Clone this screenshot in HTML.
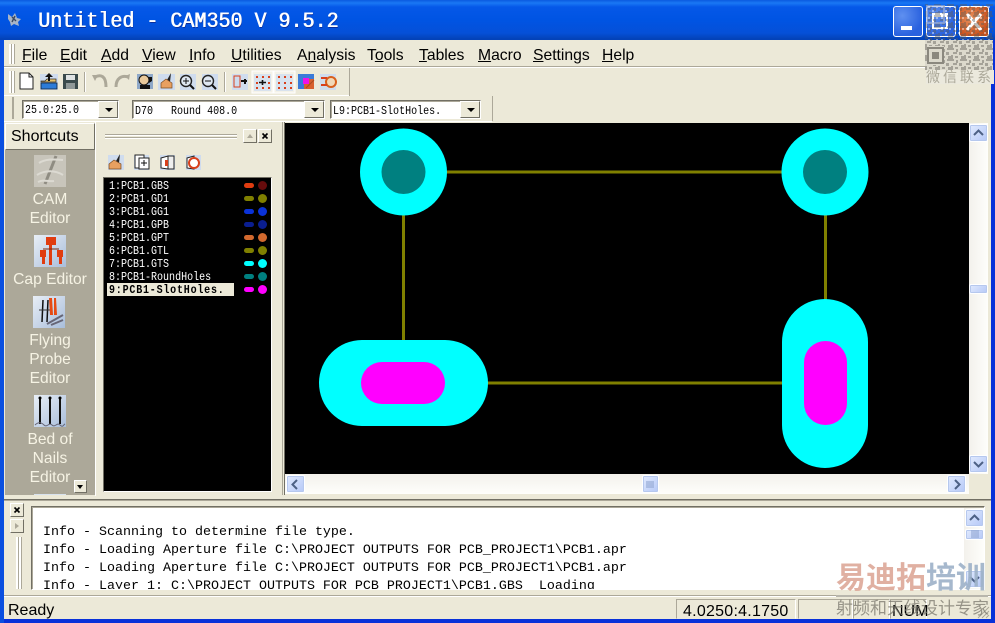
<!DOCTYPE html>
<html><head><meta charset="utf-8"><style>
html,body{margin:0;padding:0;background:#ece9d8}
#w{position:relative;width:995px;height:623px;overflow:hidden;background:#ece9d8;font-family:"Liberation Sans",sans-serif}
#w div,#w span.a,#w svg{position:absolute}
.t{white-space:pre;line-height:1}
.m{font-size:15.7px;color:#000;top:47px;white-space:pre;line-height:18px}
.m u{text-decoration:underline}
.mono{font-family:"Liberation Mono",monospace;white-space:pre;line-height:1}
.sx{font-size:12px;transform:scaleX(.834);transform-origin:0 0}
.lay{left:109px;font-size:12px;color:#fff;font-family:"Liberation Mono",monospace;white-space:pre;line-height:12px;transform:scaleX(.834);transform-origin:0 0}
.pill{left:244px;width:10px;height:5px;border-radius:3px}
.dot{left:258px;width:9px;height:9px;border-radius:50%}
.lab{left:5px;width:90px;text-align:center;color:#f6f3e4;font-size:15.6px;line-height:19px;white-space:pre}
.ic{width:32px;height:32px;background:linear-gradient(135deg,#e8eef6,#a9bedb)}
.xb{background:#ece9d8;border:1px solid;border-color:#fff #716f64 #716f64 #fff;box-sizing:border-box}
.sb{background:linear-gradient(135deg,#e1eafe,#b5c8f7);border:1px solid #fff;border-radius:2px;box-sizing:border-box;box-shadow:0 0 0 1px #b6c8ee inset}
.in{background:#fff;border:1px solid;border-color:#716f64 #fff #fff #716f64;box-sizing:border-box;box-shadow:inset 1px 1px 0 #aca899}
.cb{background:#ece9d8;border:1px solid;border-color:#fff #716f64 #716f64 #fff;box-sizing:border-box}
.cb:after{content:"";position:absolute;left:6px;top:6px;border-left:4px solid transparent;border-right:4px solid transparent;border-top:4px solid #000}
.log{left:43px;font-size:13.33px;color:#000;font-family:"Liberation Mono",monospace;white-space:pre;line-height:15px}
.gr{width:2px;background:#fff;border-right:1px solid #aca899}
</style></head><body><div id="w">

<!-- frame & title -->
<div style="left:0;top:0;width:995px;height:623px;background:#0831d9"></div>
<div style="left:0;top:0;width:995px;height:40px;background:linear-gradient(#0a5ae0 0,#1a78f4 3px,#0558e8 7px,#0054e3 20px,#0550d8 33px,#0342b8 39px)"></div>
<div style="left:0;top:40px;width:4px;height:583px;background:#0a4fe0"></div>
<div style="left:991px;top:40px;width:4px;height:583px;background:#0831d9"></div>
<div style="left:4px;top:40px;width:987px;height:579px;background:#ece9d8"></div>
<svg style="left:6px;top:11px" width="17" height="17" viewBox="0 0 17 17"><path d="M2 3l4 3 3-4 2 5 4 1-3 3 1 4-5-2-3 2-1-4-2-3z" fill="#a9b4c6"/><path d="M6 6l4 4M9 5l-3 6" stroke="#3c4a60" stroke-width="1.4"/></svg>
<div class="mono" style="left:38px;top:11px;font-size:22px;color:#fff;text-shadow:.7px 0 #fff,1px 1px 0 #0a2f9c;transform:scaleX(.91);transform-origin:0 0">Untitled - CAM350 V 9.5.2</div>

<!-- caption buttons -->
<div style="left:893px;top:6px;width:30px;height:31px;box-sizing:border-box;border:1px solid #fff;border-radius:3px;background:radial-gradient(circle at 30% 30%,#5f90f0,#2a62df 70%)"></div>
<div style="left:901px;top:26px;width:11px;height:4px;background:#fff"></div>
<div style="left:926px;top:6px;width:30px;height:31px;box-sizing:border-box;border:1px solid #fff;border-radius:3px;background:radial-gradient(circle at 30% 30%,#5f90f0,#2a62df 70%)"></div>
<div style="left:932px;top:13px;width:16px;height:16px;box-sizing:border-box;border:2px solid #fff;border-top-width:4px"></div>
<div style="left:959px;top:6px;width:30px;height:31px;box-sizing:border-box;border:1px solid #fff;border-radius:3px;background:radial-gradient(circle at 40% 40%,#e9925e,#c8501c 75%)"></div>
<svg style="left:964px;top:12px" width="20" height="20"><path d="M3 2L17 18M17 2L3 18" stroke="#fff" stroke-width="3.2"/></svg>

<!-- menu -->
<div style="left:4px;top:66px;width:987px;height:1px;background:#aca899"></div>
<div style="left:4px;top:67px;width:987px;height:1px;background:#fff"></div>
<div class="gr" style="left:9px;top:44px;height:20px"></div>
<div class="gr" style="left:12px;top:44px;height:20px"></div>
<div class="m" style="left:22px"><u>F</u>ile</div>
<div class="m" style="left:60px"><u>E</u>dit</div>
<div class="m" style="left:101px"><u>A</u>dd</div>
<div class="m" style="left:142px"><u>V</u>iew</div>
<div class="m" style="left:189px"><u>I</u>nfo</div>
<div class="m" style="left:231px"><u>U</u>tilities</div>
<div class="m" style="left:297px">A<u>n</u>alysis</div>
<div class="m" style="left:367px">T<u>o</u>ols</div>
<div class="m" style="left:419px"><u>T</u>ables</div>
<div class="m" style="left:478px"><u>M</u>acro</div>
<div class="m" style="left:533px"><u>S</u>ettings</div>
<div class="m" style="left:602px"><u>H</u>elp</div>

<!-- toolbar -->
<div style="left:349px;top:68px;width:1px;height:28px;background:#aca899"></div>
<div style="left:4px;top:95px;width:345px;height:1px;background:#fff"></div>
<div class="gr" style="left:9px;top:71px;height:22px"></div>
<div class="gr" style="left:12px;top:71px;height:22px"></div>
<svg style="left:16px;top:70px" width="330" height="24" viewBox="0 0 330 24">
<!-- new -->
<path d="M4 3h9l4 4v12H4z" fill="#fff" stroke="#222"/><path d="M13 3v4h4" fill="none" stroke="#222"/>
<!-- open -->
<rect x="24" y="4" width="18" height="16" fill="#cfdcee"/><path d="M25 11h4l2-2h9v3H25z" fill="#e8c36a" stroke="#333" stroke-width=".8"/><path d="M25 13h16v6H25z" fill="#2c7bd8" stroke="#123" stroke-width=".8"/><path d="M33 3l-4 4h3v4h2V7h3z" fill="#111"/>
<!-- save -->
<rect x="47" y="4" width="15" height="15" fill="#3a4a4c"/><rect x="50" y="5" width="9" height="5" fill="#dfe3e4"/><rect x="50" y="13" width="9" height="6" fill="#8f9898"/>
<rect x="68" y="2" width="1" height="20" fill="#aca899"/><rect x="69" y="2" width="1" height="20" fill="#fff"/>
<!-- undo/redo -->
<path d="M79 7c6-3 11-1 11 10" fill="none" stroke="#aca899" stroke-width="3"/><path d="M76 5l3 6 3-6z" fill="#aca899"/>
<path d="M100 17c0-9 6-12 12-10" fill="none" stroke="#aca899" stroke-width="3"/><path d="M114 4l-1 6-4-4z" fill="#aca899"/>
<!-- others -->
<rect x="121" y="4" width="16" height="15" fill="#8ea8c8"/><circle cx="128" cy="10" r="5" fill="#e8c89a" stroke="#111"/><path d="M132 7h4v4l-3 2zM124 15h10v4h-10z" fill="#111"/>
<rect x="142" y="4" width="17" height="16" fill="#cfdcee"/><path d="M155 3l-4 7 3 2z" fill="#222"/><path d="M145 13l5-4 6 4v5h-11z" fill="#e8a060" stroke="#7a4a20" stroke-width=".7"/>
<rect x="164" y="4" width="16" height="16" fill="#cfdcee"/><circle cx="170" cy="11" r="5.500" fill="#dfe8f2" stroke="#222" stroke-width="1.400"/><path d="M167 11h6M170 8v6" stroke="#111"/><path d="M174 15l4 4" stroke="#111" stroke-width="2"/>
<rect x="186" y="4" width="16" height="16" fill="#cfdcee"/><circle cx="192" cy="11" r="5.500" fill="#dfe8f2" stroke="#222" stroke-width="1.400"/><path d="M189 11h6" stroke="#111"/><path d="M196 15l4 4" stroke="#111" stroke-width="2"/>
<rect x="208" y="2" width="1" height="20" fill="#aca899"/><rect x="209" y="2" width="1" height="20" fill="#fff"/>
<rect x="216" y="4" width="16" height="16" fill="#cfdcee"/><rect x="218" y="6" width="6" height="11" fill="none" stroke="#d8401c"/><path d="M225 11h6M229 9v5" stroke="#111" stroke-width="2"/>
<rect x="236" y="1" width="21" height="22" fill="#f4f2e8" stroke="#fff"/><rect x="238" y="4" width="17" height="17" fill="#d8e2ee"/>
<g fill="#d8401c"><rect x="240" y="6" width="2" height="2"/><rect x="246" y="6" width="2" height="2"/><rect x="252" y="6" width="2" height="2"/><rect x="240" y="17" width="2" height="2"/><rect x="246" y="17" width="2" height="2"/><rect x="252" y="17" width="2" height="2"/><rect x="240" y="12" width="2" height="2"/><rect x="252" y="12" width="2" height="2"/></g><path d="M243 12.500h7M246.500 10v5" stroke="#111" stroke-width="1.600"/>
<rect x="258" y="1" width="21" height="22" fill="#f4f2e8" stroke="#fff"/><rect x="260" y="4" width="17" height="17" fill="#d8e2ee"/>
<g fill="#d8401c"><rect x="262" y="6" width="2" height="2"/><rect x="268" y="6" width="2" height="2"/><rect x="274" y="6" width="2" height="2"/><rect x="262" y="12" width="2" height="2"/><rect x="268" y="12" width="2" height="2"/><rect x="274" y="12" width="2" height="2"/><rect x="262" y="17" width="2" height="2"/><rect x="268" y="17" width="2" height="2"/><rect x="274" y="17" width="2" height="2"/></g>
<rect x="282" y="4" width="16" height="15" fill="#3a7ad8"/><path d="M288 9h10v10h-10z" fill="#d8602c"/><rect x="287" y="8" width="6" height="6" fill="#f010e8"/><path d="M290 18l8-8" stroke="#a84a20"/>
<rect x="304" y="4" width="16" height="16" fill="#cfdcee"/><circle cx="315" cy="12" r="5" fill="#f0d8b8" stroke="#d8601c" stroke-width="2"/><path d="M305 8h6M305 15h6" stroke="#d8401c" stroke-width="2"/>
</svg>

<!-- combos -->
<div style="left:492px;top:96px;width:1px;height:25px;background:#aca899"></div>
<div style="left:4px;top:121px;width:488px;height:1px;background:#fff"></div>
<div style="left:12px;top:97px;width:2px;height:22px;background:#aca899"></div>
<div class="in" style="left:22px;top:100px;width:97px;height:19px"></div>
<div class="cb" style="left:98px;top:101px;width:20px;height:17px"></div>
<div class="mono sx" style="left:25px;top:104px;color:#000">25.0:25.0</div>
<div class="in" style="left:132px;top:100px;width:193px;height:19px"></div>
<div class="cb" style="left:304px;top:101px;width:20px;height:17px"></div>
<div class="mono sx" style="left:135px;top:105px;color:#000">D70&#160;&#160;&#160;Round 408.0</div>
<div class="in" style="left:330px;top:100px;width:151px;height:19px"></div>
<div class="cb" style="left:460px;top:101px;width:20px;height:17px"></div>
<div class="mono sx" style="left:333px;top:105px;color:#000">L9:PCB1-SlotHoles.</div>

<!-- shortcuts -->
<div style="left:5px;top:149px;width:90px;height:346px;background:#aca899;overflow:hidden">
 <div style="left:29px;top:345px;width:32px;height:10px;background:#d8e2ee"></div>
</div>
<div style="left:5px;top:123px;width:90px;height:27px;box-sizing:border-box;background:#ece9d8;border:1px solid;border-color:#fff #716f64 #716f64 #fff"></div>
<div class="t" style="left:11px;top:129px;font-size:16px;color:#000">Shortcuts</div>
<div style="left:34px;top:155px;width:32px;height:32px;background:#c8c5bb"></div>
<svg style="left:34px;top:155px" width="32" height="32"><path d="M22 1L11 29" stroke="#8f8c82" stroke-width="3"/><path d="M5 8c6-4 14-4 24-3M3 20c8-5 18-5 26 0M4 27c6-3 10 0 16-1" stroke="#dcdad2" stroke-width="2" fill="none"/></svg>
<div class="lab" style="top:190px">CAM</div><div class="lab" style="top:209px">Editor</div>
<div class="ic" style="left:34px;top:235px"></div>
<svg style="left:34px;top:235px" width="32" height="32"><rect x="12" y="2" width="10" height="8" fill="#e03c10"/><rect x="15" y="10" width="3" height="20" fill="#e03c10"/><rect x="6" y="15" width="6" height="7" fill="#e03c10"/><rect x="8" y="22" width="3" height="7" fill="#e03c10"/><rect x="23" y="15" width="6" height="7" fill="#e03c10"/><rect x="25" y="22" width="3" height="7" fill="#e03c10"/><path d="M9 14h16" stroke="#7a2a10"/></svg>
<div class="lab" style="top:270px">Cap Editor</div>
<div class="ic" style="left:33px;top:296px"></div>
<svg style="left:33px;top:296px" width="32" height="32"><path d="M10 4l-1 22M15 4l-1 22" stroke="#111" stroke-width="1.500"/><path d="M6 14h12" stroke="#333"/><path d="M16 2h3l1 17h-3zM21 2h2l1 17h-3z" fill="#e64a14"/><path d="M14 28l16-9M18 29l12-5" stroke="#667" stroke-width="2"/></svg>
<div class="lab" style="top:331px">Flying</div><div class="lab" style="top:350px">Probe</div><div class="lab" style="top:369px">Editor</div>
<div class="ic" style="left:34px;top:395px"></div>
<svg style="left:34px;top:395px" width="32" height="32"><path d="M6 3v26M16 3v26M26 3v26" stroke="#111" stroke-width="2"/><path d="M1 30c3-3 6-3 9 0s5-3 8 0 5-3 8 0 3 0 5-1" fill="none" stroke="#667"/><circle cx="6" cy="3" r="1.500"/><circle cx="16" cy="3" r="1.500"/><circle cx="26" cy="3" r="1.500"/></svg>
<div class="lab" style="top:430px">Bed of</div><div class="lab" style="top:449px">Nails</div><div class="lab" style="top:468px">Editor</div>
<div class="xb" style="left:74px;top:480px;width:13px;height:13px"></div>
<div style="left:77px;top:485px;width:0;height:0;border-left:3.500px solid transparent;border-right:3.500px solid transparent;border-top:4px solid #000"></div>

<!-- layer panel -->
<div style="left:95px;top:121px;width:1px;height:375px;background:#fff"></div>
<div style="left:282px;top:122px;width:1px;height:373px;background:#aca899"></div>
<div style="left:105px;top:134px;width:132px;height:1px;background:#aca899"></div>
<div style="left:105px;top:135px;width:132px;height:1px;background:#fff"></div>
<div style="left:105px;top:137px;width:132px;height:1px;background:#aca899"></div>
<div style="left:105px;top:138px;width:132px;height:1px;background:#fff"></div>
<div class="xb" style="left:243px;top:129px;width:14px;height:14px"></div>
<div style="left:247px;top:134px;width:0;height:0;border-left:3px solid transparent;border-right:3px solid transparent;border-bottom:4px solid #aca899"></div>
<div class="xb" style="left:258px;top:129px;width:14px;height:14px"></div>
<svg style="left:258px;top:129px" width="14" height="14"><path d="M4.500 4.500l5 5M9.500 4.500l-5 5" stroke="#000" stroke-width="1.600"/></svg>
<svg style="left:106px;top:153px" width="100" height="18" viewBox="0 0 100 18">
<rect x="2" y="2" width="16" height="15" fill="#cfdcee"/><path d="M14 1l-4 7 3 2z" fill="#222"/><path d="M3 11l5-4 7 4v5H3z" fill="#e8a060" stroke="#7a4a20" stroke-width=".7"/>
<rect x="28" y="2" width="15" height="15" fill="#cfdcee"/><path d="M29 2h9v13h-9z" fill="#fff" stroke="#222"/><rect x="33" y="5" width="10" height="11" fill="#fff" stroke="#222"/><path d="M35 10h6M38 7v6" stroke="#111"/>
<rect x="54" y="2" width="15" height="15" fill="#cfdcee"/><path d="M55 5l7-2v13l-7-1z" fill="#fff" stroke="#222"/><rect x="62" y="3" width="6" height="13" fill="#eee" stroke="#222"/><rect x="59" y="7" width="3" height="6" fill="#d8401c"/>
<rect x="80" y="2" width="15" height="15" fill="#cfdcee"/><path d="M81 5l7-2v13l-7-1z" fill="#fff" stroke="#222"/><circle cx="88" cy="10" r="5" fill="#fff" stroke="#d8401c" stroke-width="2"/>
</svg>

<!-- layer list -->
<div style="left:103px;top:177px;width:169px;height:315px;box-sizing:border-box;background:#000;border:1px solid;border-color:#716f64 #fff #fff #716f64"></div>
<div style="left:107px;top:283px;width:127px;height:13px;background:#ece9d8"></div>
<div class="lay" style="top:180px">1:PCB1.GBS</div>
<div class="lay" style="top:193px">2:PCB1.GD1</div>
<div class="lay" style="top:206px">3:PCB1.GG1</div>
<div class="lay" style="top:219px">4:PCB1.GPB</div>
<div class="lay" style="top:232px">5:PCB1.GPT</div>
<div class="lay" style="top:245px">6:PCB1.GTL</div>
<div class="lay" style="top:258px">7:PCB1.GTS</div>
<div class="lay" style="top:271px">8:PCB1-RoundHoles</div>
<div class="lay" style="top:284px;color:#000;font-weight:bold;letter-spacing:.95px">9:PCB1-SlotHoles.</div>
<div class="pill" style="top:183px;background:#e03c10"></div><div class="dot" style="top:181px;background:#660c0c"></div>
<div class="pill" style="top:196px;background:#808000"></div><div class="dot" style="top:194px;background:#808000"></div>
<div class="pill" style="top:209px;background:#0a32d8"></div><div class="dot" style="top:207px;background:#0a32d8"></div>
<div class="pill" style="top:222px;background:#0a1e90"></div><div class="dot" style="top:220px;background:#0a1e90"></div>
<div class="pill" style="top:235px;background:#d2692e"></div><div class="dot" style="top:233px;background:#d2692e"></div>
<div class="pill" style="top:248px;background:#808000"></div><div class="dot" style="top:246px;background:#808000"></div>
<div class="pill" style="top:261px;background:#00ffff"></div><div class="dot" style="top:259px;background:#00ffff"></div>
<div class="pill" style="top:274px;background:#008080"></div><div class="dot" style="top:272px;background:#008080"></div>
<div class="pill" style="top:287px;background:#ff00ff"></div><div class="dot" style="top:285px;background:#ff00ff"></div>

<!-- canvas -->
<div style="left:284px;top:122px;width:1px;height:373px;background:#716f64"></div>
<svg style="left:285px;top:123px" width="684" height="351" viewBox="285 123 684 351">
<rect x="285" y="123" width="684" height="351" fill="#000"/>
<path d="M403.500 172H825.500V383H403.500Z" fill="none" stroke="#808000" stroke-width="3"/>
<circle cx="403.500" cy="172" r="43.500" fill="#00ffff"/><circle cx="403.500" cy="172" r="22" fill="#008080"/>
<circle cx="825" cy="172" r="43.500" fill="#00ffff"/><circle cx="825" cy="172" r="22" fill="#008080"/>
<rect x="319" y="340" width="169" height="86" rx="43" fill="#00ffff"/><rect x="361" y="362" width="84" height="42" rx="21" fill="#ff00ff"/>
<rect x="782" y="299" width="86" height="169" rx="43" fill="#00ffff"/><rect x="804" y="341" width="43" height="84" rx="21.500" fill="#ff00ff"/>
</svg>

<!-- scrollbars -->
<div style="left:969px;top:123px;width:19px;height:351px;background:linear-gradient(90deg,#f3f1ec,#fefefb)"></div>
<div class="sb" style="left:969px;top:124px;width:19px;height:18px"></div>
<svg style="left:972px;top:128px" width="13" height="10"><path d="M2 7l4.500-4.500L11 7" fill="none" stroke="#4d6185" stroke-width="2"/></svg>
<div class="sb" style="left:969px;top:284px;width:19px;height:10px"></div>
<div class="sb" style="left:969px;top:455px;width:19px;height:18px"></div>
<svg style="left:972px;top:459px" width="13" height="10"><path d="M2 3l4.500 4.500L11 3" fill="none" stroke="#4d6185" stroke-width="2"/></svg>
<div style="left:285px;top:474px;width:684px;height:20px;background:linear-gradient(#f3f1ec,#fefefb)"></div>
<div class="sb" style="left:286px;top:475px;width:19px;height:18px"></div>
<svg style="left:290px;top:478px" width="10" height="13"><path d="M7 2L2.500 6.500 7 11" fill="none" stroke="#4d6185" stroke-width="2"/></svg>
<div class="sb" style="left:642px;top:475px;width:17px;height:18px"></div>
<svg style="left:646px;top:481px" width="10" height="7"><path d="M1 0v7M3 0v7M5 0v7M7 0v7" stroke="#8aa0cc"/></svg>
<div class="sb" style="left:947px;top:475px;width:19px;height:18px"></div>
<svg style="left:952px;top:478px" width="10" height="13"><path d="M3 2l4.500 4.500L3 11" fill="none" stroke="#4d6185" stroke-width="2"/></svg>

<!-- divider -->
<div style="left:4px;top:499px;width:987px;height:1px;background:#716f64"></div>
<div style="left:4px;top:500px;width:987px;height:1px;background:#aca899"></div>

<!-- log -->
<div class="xb" style="left:10px;top:503px;width:14px;height:14px"></div>
<svg style="left:10px;top:503px" width="14" height="14"><path d="M4.500 4.500l5 5M9.500 4.500l-5 5" stroke="#000" stroke-width="1.600"/></svg>
<div class="xb" style="left:10px;top:519px;width:14px;height:14px"></div>
<div style="left:15px;top:523px;width:0;height:0;border-top:3px solid transparent;border-bottom:3px solid transparent;border-left:4px solid #aca899"></div>
<div class="gr" style="left:16px;top:537px;height:52px"></div>
<div class="gr" style="left:19px;top:537px;height:52px"></div>
<div style="left:31px;top:506px;width:954px;height:84px;box-sizing:border-box;background:#fff;border:1px solid;border-color:#716f64 #fff #fff #716f64;box-shadow:inset 1px 1px 0 #aca899;overflow:hidden"></div>
<div style="left:33px;top:508px;width:931px;height:81px;overflow:hidden">
<div class="log" style="left:10px;top:17px">Info - Scanning to determine file type.</div>
<div class="log" style="left:10px;top:35px">Info - Loading Aperture file C:\PROJECT OUTPUTS FOR PCB_PROJECT1\PCB1.apr</div>
<div class="log" style="left:10px;top:53px">Info - Loading Aperture file C:\PROJECT OUTPUTS FOR PCB_PROJECT1\PCB1.apr</div>
<div class="log" style="left:10px;top:71px">Info - Layer 1: C:\PROJECT OUTPUTS FOR PCB_PROJECT1\PCB1.GBS  Loading</div>
</div>
<div style="left:964px;top:508px;width:20px;height:81px;background:linear-gradient(90deg,#f3f1ec,#fefefb)"></div>
<div class="sb" style="left:965px;top:509px;width:19px;height:18px"></div>
<svg style="left:968px;top:513px" width="13" height="10"><path d="M2 7l4.500-4.500L11 7" fill="none" stroke="#4d6185" stroke-width="2"/></svg>
<div class="sb" style="left:965px;top:529px;width:19px;height:11px"></div>
<svg style="left:970px;top:530px" width="10" height="9"><path d="M1 1h8M1 3h8M1 5h8M1 7h8" stroke="#8aa0cc"/></svg>
<div class="sb" style="left:965px;top:570px;width:19px;height:18px"></div>
<svg style="left:968px;top:574px" width="13" height="10"><path d="M2 3l4.500 4.500L11 3" fill="none" stroke="#4d6185" stroke-width="2"/></svg>

<!-- status -->
<div style="left:4px;top:595px;width:987px;height:1px;background:#aca899"></div>
<div style="left:4px;top:596px;width:987px;height:1px;background:#fff"></div>
<div class="t" style="left:8px;top:603px;font-size:16px;color:#000">Ready</div>
<div style="left:676px;top:599px;width:120px;height:20px;box-sizing:border-box;border:1px solid;border-color:#aca899 #fff transparent #aca899"></div>
<div class="t" style="left:683px;top:604px;font-size:16px;color:#000;letter-spacing:.25px">4.0250:4.1750</div>
<div style="left:798px;top:599px;width:55px;height:20px;box-sizing:border-box;border:1px solid;border-color:#aca899 #fff transparent #aca899"></div>
<div style="left:853px;top:599px;width:37px;height:20px;box-sizing:border-box;border:1px solid;border-color:#aca899 #fff transparent #aca899"></div>
<div style="left:890px;top:599px;width:37px;height:20px;box-sizing:border-box;border:1px solid;border-color:#aca899 #fff transparent #aca899"></div>
<div class="t" style="left:892px;top:604px;font-size:16px;color:#000">NUM</div>
<svg style="left:975px;top:604px" width="15" height="15"><path d="M14 3L3 14M14 7L7 14M14 11l-3 3" stroke="#aca899"/></svg>

<!-- watermarks -->
<svg style="left:925px;top:4px" width="68" height="66" viewBox="0 0 68 66">
<defs>
<pattern id="q" width="13" height="11" patternUnits="userSpaceOnUse"><path d="M0 0h3v2H0zM5 1h2v3H5zM9 0h4v2H9zM2 4h4v2H2zM8 4h3v3H8zM0 7h2v4H0zM4 8h3v2H4zM10 8h3v3h-3z" fill="#5f5d56"/><path d="M3 2h2v2H3zM7 6h2v2H7zM11 2h2v2h-2z" fill="#fff"/></pattern>
<pattern id="q2" width="13" height="11" patternUnits="userSpaceOnUse"><rect width="13" height="11" fill="#dcd9cc"/><path d="M0 0h3v2H0zM5 1h2v3H5zM9 0h4v2H9zM2 4h4v2H2zM8 4h3v3H8zM0 7h2v4H0zM4 8h3v2H4zM10 8h3v3h-3z" fill="#a5a298"/></pattern>
</defs>
<rect width="68" height="36" fill="url(#q)" opacity=".42"/>
<rect y="36" width="68" height="30" fill="url(#q2)"/>
<rect x="2" y="2" width="17" height="17" fill="none" stroke="#a8b8d8" stroke-width="2" opacity=".6"/>
<rect x="2" y="42" width="17" height="19" fill="#dcd9cc"/><rect x="3" y="44" width="15" height="15" fill="none" stroke="#8b887e" stroke-width="2"/><rect x="7" y="48" width="7" height="7" fill="#8b887e"/>
</svg>
<div class="t" style="left:926px;top:70px;width:68px;height:14px;font-size:14px;letter-spacing:3px;color:#aca99a;font-family:'Liberation Sans','Noto Sans CJK SC',sans-serif;background:#ebe9dd">微信联系</div>
<div class="t" style="left:836px;top:564px;font-size:30px;font-weight:bold;color:#dda898;font-family:'Liberation Sans','Noto Sans CJK SC',sans-serif;opacity:.9">易迪拓</div>
<div class="t" style="left:926px;top:564px;font-size:30px;font-weight:bold;color:#9db1c8;font-family:'Liberation Sans','Noto Sans CJK SC',sans-serif;opacity:.9">培训</div>
<div style="left:836px;top:595px;width:152px;height:2px;background:#b8b6ac"></div>
<div class="t" style="left:836px;top:600px;font-size:17px;color:#7a776d;font-family:'Liberation Sans','Noto Sans CJK SC',sans-serif;opacity:.75">射频和天线设计专家</div>

</div></body></html>
